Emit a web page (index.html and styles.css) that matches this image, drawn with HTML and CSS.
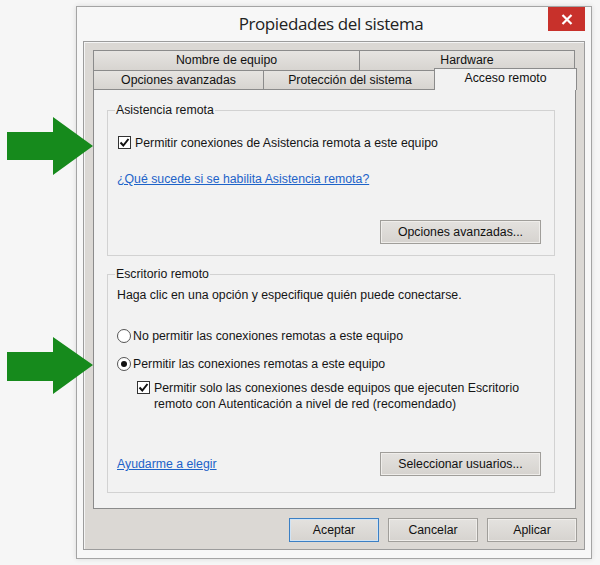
FILE: index.html
```html
<!DOCTYPE html>
<html lang="es">
<head>
  <meta charset="UTF-8" />
  <title>Propiedades del sistema</title>
  <link rel="stylesheet" href="styles.css">
</head>
<body>

  <!-- green pointer arrows drawn over the screenshot -->
  <svg class="arrows" width="100" height="565" viewBox="0 0 100 565">
    <polygon points="7,132 53,132 53,117 93,146 53,175 53,160 7,160" />
    <polygon points="7,352 53,352 53,337 93,365 53,394 53,381 7,381" />
  </svg>

  <div class="window">
    <div class="titlebar">
      <span></span>
      <div class="title">Propiedades del sistema</div>
      <div class="close">
        <svg width="12" height="11" viewBox="0 0 12 11">
          <path d="M1.5 1 L10.5 10 M10.5 1 L1.5 10" stroke="#fff" stroke-width="2.2" />
        </svg>
      </div>
    </div>

    <div class="client">
      <div class="tabs">
        <div class="tab-row row-back">
          <div class="tab w-nombre">Nombre de equipo</div>
          <div class="tab w-hardware">Hardware</div>
        </div>
        <div class="tab-row row-front">
          <div class="tab w-opciones">Opciones avanzadas</div>
          <div class="tab w-proteccion">Protección del sistema</div>
          <div class="tab selected">Acceso remoto</div>
        </div>
      </div>

      <div class="panel">
        <div class="group group-asistencia">
          <div class="group-title">Asistencia remota</div>
          <div class="check-row first-check">
            <span class="checkbox">
              <svg width="11" height="11" viewBox="0 0 11 11"><path d="M1.5 5.5 L4.3 8.5 L9.5 2" fill="none" stroke="#111" stroke-width="2" /></svg>
            </span>
            <span>Permitir conexiones de Asistencia remota a este equipo</span>
          </div>
          <a class="link link-asistencia" href="#">¿Qué sucede si se habilita Asistencia remota?</a>
          <div class="group-actions actions-asistencia">
            <button class="btn">Opciones avanzadas...</button>
          </div>
        </div>

        <div class="group group-escritorio">
          <div class="group-title">Escritorio remoto</div>
          <p class="hint">Haga clic en una opción y especifique quién puede conectarse.</p>
          <div class="radio-row radio-first">
            <span class="radio"></span>
            <span>No permitir las conexiones remotas a este equipo</span>
          </div>
          <div class="radio-row radio-second">
            <span class="radio on"></span>
            <span>Permitir las conexiones remotas a este equipo</span>
          </div>
          <div class="check-row sub-check">
            <span class="checkbox">
              <svg width="11" height="11" viewBox="0 0 11 11"><path d="M1.5 5.5 L4.3 8.5 L9.5 2" fill="none" stroke="#111" stroke-width="2" /></svg>
            </span>
            <span>Permitir solo las conexiones desde equipos que ejecuten Escritorio<br>remoto con Autenticación a nivel de red (recomendado)</span>
          </div>
          <div class="group-actions actions-escritorio">
            <a class="link" href="#">Ayudarme a elegir</a>
            <button class="btn">Seleccionar usuarios...</button>
          </div>
        </div>
      </div>

      <div class="dialog-buttons">
        <button class="btn default">Aceptar</button>
        <button class="btn">Cancelar</button>
        <button class="btn">Aplicar</button>
      </div>
    </div>
  </div>

</body>
</html>
```

FILE: styles.css
```css
body {
  margin: 0;
  background: #f6f6f6;
  font-family: 'Liberation Sans', Arial, sans-serif;
  font-size: 12.3px;
  color: #151515;
  width: 600px;
  height: 565px;
  overflow: hidden;
}

.arrows {
  position: absolute;
  top: 0;
  left: 0;
  z-index: 5;
}

.arrows polygon {
  fill: #168a1c;
}

.window {
  box-sizing: border-box;
  width: 516px;
  height: 553px;
  margin: 6px 0 0 76px;
  border: 1px solid #a4a4a4;
  background: #f7f7f7;
  box-shadow: 0 0 5px rgba(0, 0, 0, 0.12);
}

.titlebar {
  display: grid;
  grid-template-columns: 1fr auto 1fr;
  height: 34px;
  padding-right: 6px;
}

.title {
  font-family: 'Open Sans', 'Noto Sans', sans-serif;
  font-size: 17px;
  letter-spacing: -0.4px;
  color: #222;
  line-height: 34px;
}

.close {
  justify-self: end;
  width: 37px;
  height: 24px;
  background: #c8312b;
  display: flex;
  align-items: center;
  justify-content: center;
}

.client {
  margin: 0 6px 6px 6px;
  height: 509px;
  box-sizing: border-box;
  border: 1px solid #9c9c9c;
  box-shadow: inset 1px 1px 0 #f4f4f4;
  background: #dbd8d4;
  padding: 8px 8px 8px 9px;
}

/* tabs */

.tab-row {
  display: flex;
  align-items: flex-end;
}

.row-back {
  height: 20px;
}

.row-front {
  height: 19px;
}

.tab {
  box-sizing: border-box;
  border: 1px solid #8b8b8b;
  border-bottom: none;
  border-right: none;
  background: linear-gradient(#e6e4e1, #d7d4d0);
  text-align: center;
  color: #111;
}

.row-back .tab {
  height: 20px;
  line-height: 19px;
}

.row-front .tab {
  height: 19px;
  line-height: 18px;
}

.w-nombre { width: 266px; }
.w-hardware { width: 216px; border-right: 1px solid #8b8b8b; }
.w-opciones { width: 170px; }
.w-proteccion { width: 173px; }

.tab.selected {
  position: relative;
  z-index: 1;
  width: 143px;
  height: 22px;
  margin: 0 -2px -1px -2px;
  border-right: 1px solid #8b8b8b;
  background: #f2f2f2;
  line-height: 18px;
}

.panel {
  box-sizing: border-box;
  height: 420px;
  border: 1px solid #8b8b8b;
  background: #f2f2f2;
  padding: 20px 20px 0 13px;
}

/* group boxes */

.group {
  border: 1px solid #d2d2d2;
  padding: 0 13px 0 9px;
}

.group-title {
  width: fit-content;
  margin: -8px 0 0 -2px;
  padding: 0 1px;
  line-height: 15px;
  background: #f2f2f2;
}

.group-escritorio {
  margin-top: 18px;
}

.check-row,
.radio-row {
  display: flex;
  align-items: flex-start;
  line-height: 16px;
}

.checkbox {
  box-sizing: border-box;
  width: 13px;
  height: 13px;
  margin: 1px 4px 0 0;
  border: 1px solid #333;
  background: #fff;
  display: flex;
  align-items: center;
  justify-content: center;
  flex-shrink: 0;
}

.first-check {
  margin: 17px 0 0 1px;
}

.link {
  display: block;
  width: fit-content;
  color: #1d63c9;
  line-height: 16px;
}

.link-asistencia {
  margin-top: 20px;
}

.group-actions {
  display: flex;
  justify-content: space-between;
  align-items: center;
}

.actions-asistencia {
  justify-content: flex-end;
  margin: 33px 0 11px;
}

.hint {
  margin: 5px 0 0;
  line-height: 16px;
}

.radio {
  box-sizing: border-box;
  width: 14px;
  height: 14px;
  margin: 1px 2px 0 0;
  border: 1px solid #555;
  border-radius: 50%;
  background: #fff;
  display: flex;
  align-items: center;
  justify-content: center;
}

.radio.on::after {
  content: "";
  width: 6px;
  height: 6px;
  border-radius: 50%;
  background: #111;
}

.radio-first {
  margin-top: 25px;
}

.radio-second {
  margin-top: 12px;
}

.sub-check {
  margin: 8px 0 0 20px;
}

.actions-escritorio {
  margin: 40px 0 16px;
}

/* buttons */

.btn {
  box-sizing: border-box;
  width: 161px;
  height: 24px;
  padding: 0;
  border: 1px solid #a09e9a;
  background: linear-gradient(#e4e2df, #d6d3cf);
  box-shadow: inset 0 0 0 1px #efedea;
  font-family: 'Liberation Sans', Arial, sans-serif;
  font-size: 12.3px;
  color: #111;
}

.dialog-buttons {
  display: flex;
  justify-content: flex-end;
  gap: 9px;
  margin: 9px -1px 0 0;
}

.dialog-buttons .btn {
  width: 90px;
}

.btn.default {
  border-color: #3b7fc4;
  box-shadow: inset 0 0 0 1px #cfe3f5;
}
```
